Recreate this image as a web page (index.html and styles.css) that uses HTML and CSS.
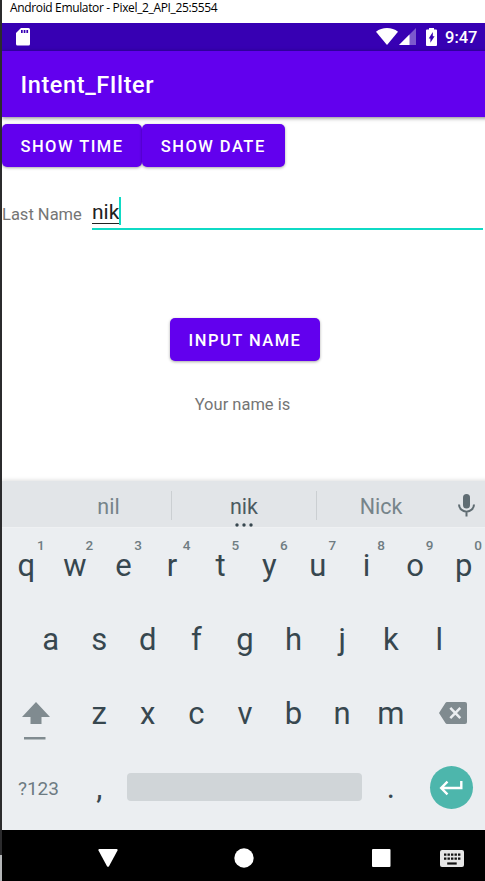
FILE: index.html
```html
<!DOCTYPE html>
<html lang="en">
<head>
<meta charset="utf-8">
<title>Android Emulator</title>
<link rel="stylesheet" href="styles.css">
</head>
<body>
<div class="edge"></div>
<div class="window">
  <div class="titlebar">Android Emulator - Pixel_2_API_25:5554</div>
  <div class="phone">
    <div class="status">
      <svg class="sd" width="14" height="18" viewBox="0 0 14 18"><path fill="#fff" d="M5 0h7.500q1.500 0 1.500 1.500v14.500q0 1.500-1.500 1.500h-11Q0 17.500 0 16V5z"/><path fill="#3700b3" d="M5 2h1.700v3H5zM7.700 2h1.700v3H7.700zM10.400 2h1.700v3h-1.700z"/></svg>
      <svg class="wifi" width="22" height="17" viewBox="0 0 22 17"><path fill="#fff" d="M0 3.700C6-1.200 16-1.200 22 3.700L11 17z"/></svg>
      <svg class="signal" width="17" height="17" viewBox="0 0 17 17"><path fill="#fff" opacity=".35" d="M17 0v17H0z"/><path fill="#fff" d="M10.500 6.500V17H0z"/></svg>
      <svg class="battery" width="11" height="18" viewBox="0 0 11 18"><path fill="#fff" d="M3 0h5v1.500h2q1 0 1 1V17q0 1-1 1H1q-1 0-1-1V2.500q0-1 1-1h2z"/><path fill="#3700b3" d="M6.800 4v4.200h1.800l-4.200 6.500v-4.200H2.700z"/></svg>
      <span class="clock">9:47</span>
    </div>
    <div class="appbar">Intent_FIlter</div>
    <div class="content">
      <div class="actions"><div class="btn show-time">SHOW TIME</div><div class="btn show-date">SHOW DATE</div></div>
      <div class="field">
        <span class="label">Last Name</span>
        <div class="input"><span class="typed">nik</span><i class="caret"></i></div>
      </div>
      <div class="btn submit">INPUT NAME</div>
      <div class="result">Your name is</div>
    </div>
    <div class="keyboard">
      <div class="suggest">
        <span>nil</span><i class="divider"></i><span class="best">nik<svg class="dots" width="18" height="4" viewBox="0 0 18 4"><g fill="#37474f"><circle cx="2" cy="2" r="1.700"/><circle cx="9" cy="2" r="1.700"/><circle cx="16" cy="2" r="1.700"/></g></svg></span><i class="divider"></i><span class="last">Nick</span>
        <svg class="mic" width="17" height="23" viewBox="0 0 17 23"><rect x="5" y="0" width="7" height="14.500" rx="3.500" fill="#5f6c72"/><path d="M1 10.500a7.500 7.200 0 0 0 15 0M8.500 18v4.500" fill="none" stroke="#5f6c72" stroke-width="2"/></svg>
      </div>
      <div class="row ten">
        <span>q<sup>1</sup></span><span>w<sup>2</sup></span><span>e<sup>3</sup></span><span>r<sup>4</sup></span><span>t<sup>5</sup></span><span>y<sup>6</sup></span><span>u<sup>7</sup></span><span>i<sup>8</sup></span><span>o<sup>9</sup></span><span>p<sup>0</sup></span>
      </div>
      <div class="row nine">
        <span>a</span><span>s</span><span>d</span><span>f</span><span>g</span><span>h</span><span>j</span><span>k</span><span>l</span>
      </div>
      <div class="row seven">
        <span class="shift"><svg width="28" height="39" viewBox="0 0 28 39"><path fill="#808b90" d="M14 0l14 15h-8.500v7h-11v-7H0zM2 35h21.500v2.500H2z"/></svg></span>
        <span>z</span><span>x</span><span>c</span><span>v</span><span>b</span><span>n</span><span>m</span>
        <span class="delete"><svg width="28" height="22" viewBox="0 0 28 22"><path fill="#808b90" d="M8 0h18q2 0 2 2v18q0 2-2 2H8q-1 0-1.600-1L0 11l6.400-10Q7 0 8 0z"/><path d="M11.300 5.800l10 10.400m0-10.400l-10 10.400" stroke="#ebeef1" stroke-width="2.500"/></svg></span>
      </div>
      <div class="row bottom">
        <span class="symbols">?123</span><span class="comma">,</span><span class="space"></span><span>.</span>
        <span class="enter"><svg width="24" height="16" viewBox="0 0 24 16"><path d="M22.300 1v7H2.500M8.500 1.700L2.200 8l6.300 6.300" fill="none" stroke="#fff" stroke-width="2.400"/></svg></span>
      </div>
    </div>
    <div class="navbar">
      <svg class="back" width="20" height="18" viewBox="0 0 20 18"><path fill="#fff" d="M1.300 0h17.400q1.300 0.300.8 1.500L11 17.300q-1 1-2 0L.5 1.500Q0 .3 1.300 0z"/></svg>
      <svg class="home" width="20" height="20" viewBox="0 0 20 20"><circle cx="10" cy="10" r="9.700" fill="#fff"/></svg>
      <svg class="recent" width="19" height="18" viewBox="0 0 19 18"><rect width="18.500" height="18" rx="1" fill="#fff"/></svg>
      <svg class="ime" width="24" height="17" viewBox="0 0 24 17"><rect width="24" height="17" rx="2" fill="#e6e6e6"/><path d="M4 4.700h16.500M4 8.700h16.500" stroke="#111" stroke-width="2.300" stroke-dasharray="2.400 1.100"/><path d="M7.200 13.500h9.500" stroke="#111" stroke-width="2.200"/></svg>
    </div>
  </div>
</div>
</body>
</html>
```
FILE: styles.css
```css
* { box-sizing: border-box; }
body {
  margin: 0;
  width: 485px;
  height: 881px;
  display: flex;
  overflow: hidden;
  background: #fff;
  font-family: Roboto, "Liberation Sans", sans-serif;
}
svg { display: block; flex: none; }
.edge { width: 2px; flex: none; background: linear-gradient(#2b2b2d 855px, #b4b6b8 855px); }
.window { width: 483px; overflow: hidden; }
.titlebar {
  height: 23px;
  padding-left: 8px;
  font: 12px/16px "Open Sans", sans-serif;
  letter-spacing: -0.35px;
  color: #000;
  white-space: nowrap;
}
.phone { width: 487px; height: 858px; display: flex; flex-direction: column; }
.status {
  height: 28px;
  flex: none;
  display: flex;
  align-items: flex-start;
  padding: 5px 0 0 14px;
  background: #3700b3;
}
.wifi { margin-left: 346px; }
.signal { margin-left: 1px; }
.battery { margin: 0 8.500px 0 9.500px; }
.clock { color: #fff; font-size: 16.500px; font-weight: 500; line-height: 20px; }
.appbar {
  height: 66px;
  flex: none;
  padding-left: 18.500px;
  background: #6200ee;
  color: #fff;
  font-size: 23.500px;
  font-weight: 500;
  line-height: 69px;
  letter-spacing: 0.6px;
  box-shadow: 0 1px 4px rgba(0, 0, 0, .5);
}
.content { height: 364px; flex: none; padding-top: 7px; }
.actions { display: flex; }
.btn {
  height: 43px;
  border-radius: 5px;
  background: #6200ee;
  color: #fff;
  font-size: 16.500px;
  font-weight: 500;
  line-height: 46px;
  letter-spacing: 1.48px;
  text-align: center;
  white-space: nowrap;
  box-shadow: 0 1px 3px rgba(0, 0, 0, .35);
}
.show-time { width: 140px; }
.show-date { width: 142.500px; }
.field { height: 33px; margin-top: 30px; display: flex; }
.label { width: 90px; color: #757575; font-size: 16.500px; line-height: 36px; }
.input {
  width: 391px;
  height: 33px;
  display: flex;
  border-bottom: 2px solid #0fdac5;
  color: #212121;
  font-size: 21px;
  line-height: 31px;
}
.typed { height: 27px; border-bottom: 1px solid #212121; }
.caret { width: 2px; height: 28px; background: #0fdac5; }
.submit { width: 150px; margin: 88px 0 0 168px; }
.result { margin-top: 34px; width: 481px; color: #757575; font-size: 16.500px; line-height: 20px; text-align: center; }
.keyboard {
  height: 349px;
  flex: none;
  background: #ebeef1;
  box-shadow: 0 -1px 4px rgba(0, 0, 0, .13);
}
.suggest {
  height: 47px;
  display: flex;
  padding: 1px 0 0 42px;
  background: #e2e5e8;
  border-bottom: 1px solid #eff1f3;
  color: #76848a;
  font-size: 21.500px;
  line-height: 49px;
}
.suggest span { width: 127px; text-align: center; padding-left: 2px; }
.suggest .best { width: 144px; padding: 0; color: #4b5a61; position: relative; }
.suggest .last { width: 128px; padding: 0; }
.divider { width: 1px; height: 29px; margin-top: 9px; background: #cbcfd2; }
.dots { position: absolute; left: 63px; top: 41px; }
.mic { margin: 12px 0 0 13px; }
.row { height: 74px; display: grid; color: #37474f; font-size: 31px; line-height: 76px; text-align: center; }
.row span { position: relative; }
.ten { grid-template-columns: repeat(10, 48.600px); }
.nine { grid-template-columns: repeat(9, 48.600px); padding-left: 24.300px; }
.seven { grid-template-columns: 72.900px repeat(7, 48.600px) 73px; }
.bottom { grid-template-columns: 72.900px 48.600px 243px 48.600px 73px; }
sup { position: absolute; left: 35px; top: 7px; font-size: 13.500px; font-weight: 500; line-height: 20px; color: #6f7c82; }
.shift { padding: 26px 0 0 19.500px; }
.delete { padding: 26px 0 0 24px; }
.symbols { color: #6d7b82; font-size: 19px; line-height: 78px; }
.space { width: 235px; height: 28px; margin: 23px 0 0 3.500px; border-radius: 4px; background: #d0d5d8; }
.enter { width: 43px; height: 43px; margin: 16px 0 0 14.500px; display: grid; place-items: center; border-radius: 50%; background: #4db6ac; }
.navbar { height: 51px; flex: none; display: flex; align-items: center; padding-top: 5px; background: #000; }
.back { margin-left: 95.500px; }
.home { margin-left: 116.500px; }
.recent { margin-left: 117.500px; }
.ime { margin-left: 49px; }
```
